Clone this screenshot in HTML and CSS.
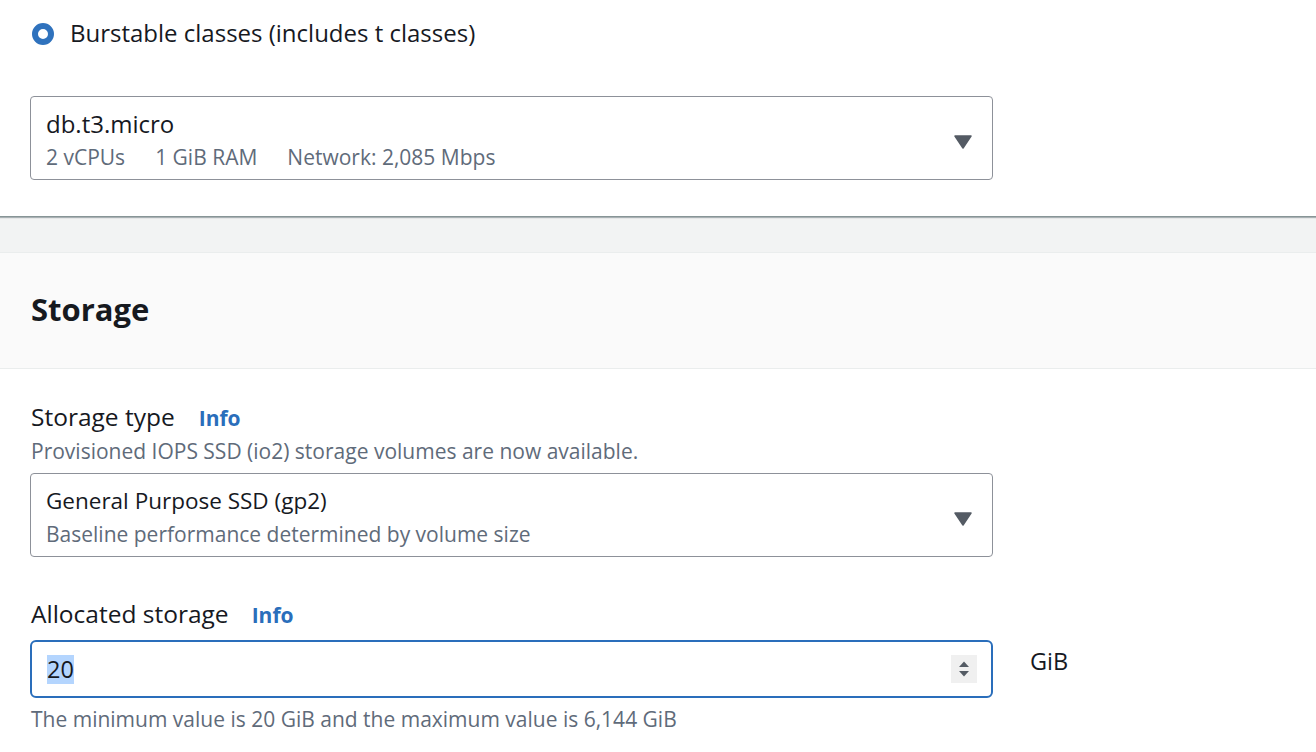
FILE: index.html
```html
<!DOCTYPE html>
<html>
<head>
<meta charset="utf-8">
<link rel="stylesheet" href="styles.css">
</head>
<body>
<div class="panel">
  <div class="radio-row">
    <span class="radio"></span>
    <span class="radio-label">Burstable classes (includes t classes)</span>
  </div>
  <div class="select">
    <div class="select-text">
      <div class="select-main">db.t3.micro</div>
      <div class="select-sub"><span>2 vCPUs</span><span>1 GiB RAM</span><span>Network: 2,085 Mbps</span></div>
    </div>
    <svg class="caret" width="18" height="14" viewBox="0 0 18 14"><path d="M1 1 H17 L9 13 Z" fill="#545b64" stroke="#545b64" stroke-width="1.5" stroke-linejoin="round"/></svg>
  </div>
</div>
<div class="band"></div>
<div class="section-header">
  <h2>Storage</h2>
</div>
<div class="section-body">
  <div class="label-row"><span class="label">Storage type</span><span class="info info1">Info</span></div>
  <div class="desc">Provisioned IOPS SSD (io2) storage volumes are now available.</div>
  <div class="select select2">
    <div class="select-text">
      <div class="select-main select-main2">General Purpose SSD (gp2)</div>
      <div class="select-sub">Baseline performance determined by volume size</div>
    </div>
    <svg class="caret" width="18" height="14" viewBox="0 0 18 14"><path d="M1 1 H17 L9 13 Z" fill="#545b64" stroke="#545b64" stroke-width="1.5" stroke-linejoin="round"/></svg>
  </div>
  <div class="label-row label-row2"><span class="label">Allocated storage</span><span class="info">Info</span></div>
  <div class="input-row">
    <div class="input">
      <span class="value">20</span>
      <span class="spinner">
        <svg width="26" height="28" viewBox="0 0 26 28"><path d="M8 12 L13 6.5 L18 12 Z" fill="#545b64"/><path d="M8 16 L13 21.5 L18 16 Z" fill="#545b64"/></svg>
      </span>
    </div>
    <span class="unit">GiB</span>
  </div>
  <div class="hint">The minimum value is 20 GiB and the maximum value is 6,144 GiB</div>
</div>
</body>
</html>
```
FILE: styles.css
```css
* { box-sizing: border-box; }
html, body { margin: 0; padding: 0; }
body {
  font-family: "Open Sans", "Noto Sans", sans-serif;
  color: #16191f;
  background: #ffffff;
  width: 1316px;
  height: 752px;
  overflow: hidden;
}
.panel {
  background: #fff;
  padding: 18px 0 36px 30px;
  border-bottom: 1px solid #879596;
  box-shadow: 0 1px 1px rgba(0,28,36,0.3);
  position: relative;
  z-index: 1;
}
.radio-row {
  display: flex;
  align-items: center;
  height: 30px;
}
.radio {
  width: 22px;
  height: 22px;
  border-radius: 50%;
  background: #fff;
  border: 6.5px solid #2f72bd;
  margin-left: 2px;
  margin-top: 2px;
}
.radio-label {
  font-size: 24px;
  margin-left: 16px;
  line-height: 30px;
}
.select {
  width: 963px;
  border: 1px solid #8d9199;
  border-radius: 4px;
  padding: 12px 20px 8px 15px;
  display: flex;
  align-items: center;
  justify-content: space-between;
  margin-top: 48px;
}
.select-main {
  font-size: 24px;
  line-height: 30px;
}
.select-main2 { font-size: 22.5px; }
.select-sub {
  font-size: 21px;
  line-height: 28px;
  margin-top: 4px;
  color: #5f6b7a;
  display: flex;
  gap: 30px;
}
.caret { flex: none; margin-top: 4px; }
.band {
  height: 36px;
  background: #f2f3f3;
  border-bottom: 1px solid #eaeded;
}
.section-header {
  background: #fafafa;
  padding: 39px 31px 42px;
  border-bottom: 1px solid #eaeded;
}
.section-header h2 {
  margin: 0;
  font-size: 31px;
  line-height: 34px;
  font-weight: 700;
}
.section-body {
  padding: 33px 30px 0 31px;
}
.label-row {
  display: flex;
  align-items: baseline;
  font-size: 24.5px;
  line-height: 30px;
}
.info {
  color: #2a6ebb;
  font-weight: 700;
  font-size: 21px;
  margin-left: 23px;
}
.info1 { margin-left: 24px; }
.desc {
  margin-top: 5px;
  font-size: 21px;
  line-height: 26px;
  color: #5f6b7a;
}
.select2 {
  margin-top: 9px;
  margin-left: -1px;
}
.label-row2 { margin-top: 42px; }
.input-row {
  display: flex;
  align-items: flex-start;
  margin-top: 10px;
  margin-left: -1px;
}
.input {
  width: 963px;
  height: 58px;
  border: 2px solid #2a6ebb;
  border-radius: 6px;
  padding: 0 14px 0 14px;
  display: flex;
  align-items: center;
  justify-content: space-between;
}
.value {
  font-size: 23.5px;
  line-height: 29px;
  background: #b4d5fe;
  margin-left: 1px;
}
.spinner {
  width: 26px;
  height: 28px;
  background: #f0f0f0;
  display: block;
}
.spinner svg { display: block; }
.unit {
  font-size: 23.5px;
  line-height: 30px;
  margin-left: 37px;
  margin-top: 6px;
}
.hint {
  margin-top: 8px;
  font-size: 21px;
  line-height: 26px;
  color: #5f6b7a;
}
```
